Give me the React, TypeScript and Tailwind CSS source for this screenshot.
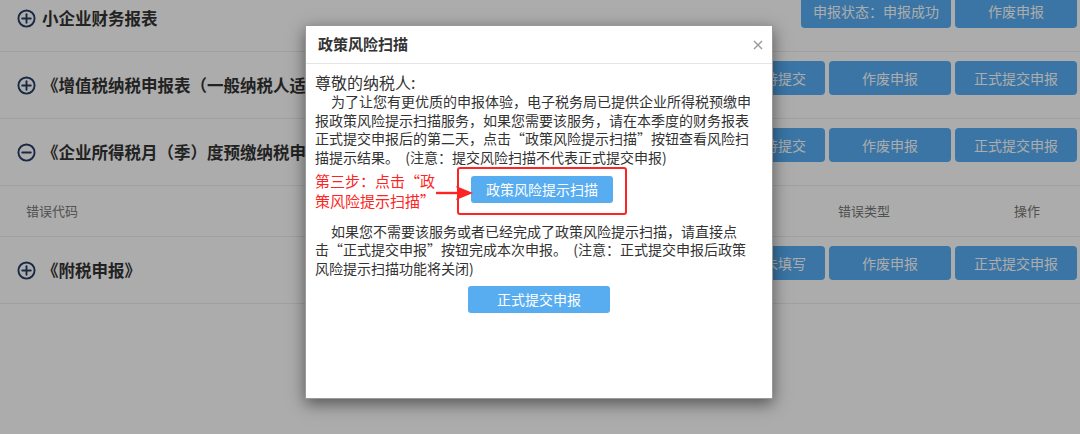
type Row = {
    title: string;
    open?: boolean;
    status: string;
    actions: string[];
};

const rows: Row[] = [
    { title: "小企业财务报表", status: "申报状态：申报成功", actions: ["作废申报"] },
    { title: "《增值税纳税申报表（一般纳税人适用）》", status: "申报状态：待提交", actions: ["作废申报", "正式提交申报"] },
    { title: "《企业所得税月（季）度预缴纳税申报表（A类）》", open: true, status: "申报状态：待提交", actions: ["作废申报", "正式提交申报"] },
];

const lastRow: Row = { title: "《附税申报》", status: "申报状态：未填写", actions: ["作废申报", "正式提交申报"] };

const ToggleIcon = ({ open }: { open?: boolean }) => (
    <svg className="w-[19px] h-[19px] shrink-0" viewBox="0 0 20 20" fill="none" stroke="#263e66" strokeWidth={2}>
        <circle cx="10" cy="10" r="8.5" />
        <path d="M5.5 10h9" strokeLinecap="round" />
        {!open && <path d="M10 5.5v9" strokeLinecap="round" />}
    </svg>
);

const PageButton = ({ label, wide }: { label: string; wide?: boolean }) => (
    <div className={`${wide ? "w-[150px]" : "w-[122px]"} h-[34px] rounded-[4px] bg-[#56aef5] text-white text-[14px] flex items-center justify-center`}>
        {label}
    </div>
);

const ReportRow = ({ row, first }: { row: Row; first?: boolean }) => (
    <div className={`${first ? "-mt-[15px]" : ""} h-[67px] border-b border-[#ececec] flex items-center pl-[17px] pr-[3px]`}>
        <ToggleIcon open={row.open} />
        <span className="ml-[6px] flex-1 min-w-0 text-[16.5px] font-bold text-[#333] whitespace-nowrap overflow-hidden">{row.title}</span>
        <div className="self-start mt-[9px] flex gap-[4px]">
            <PageButton label={row.status} wide />
            {row.actions.map((a) => (
                <PageButton key={a} label={a} />
            ))}
        </div>
    </div>
);

export default function App() {
    return (
        <div className="relative h-[434px] w-full overflow-hidden bg-white font-['Noto_Sans_CJK_SC',sans-serif]">
            {/* page behind the dialog */}
            <div>
                {rows.map((r, i) => (
                    <ReportRow key={r.title} row={r} first={i === 0} />
                ))}
                <div className="h-[51px] border-b border-[#ececec] flex items-center text-[13px] text-[#777] pr-[3px]">
                    <span className="flex-1 pl-[26px]">错误代码</span>
                    <span className="w-[130px] text-center">错误类型</span>
                    <span className="w-[100px] ml-[48px] text-center">操作</span>
                </div>
                <ReportRow row={lastRow} />
            </div>

            {/* backdrop */}
            <div className="absolute inset-0 bg-black/[0.325]" />

            {/* dialog */}
            <div className="absolute left-[305px] top-[25px] w-[468px] h-[374px] bg-white border border-[#999] shadow-[0_5px_15px_rgba(0,0,0,0.5)]">
                <div className="h-[38px] border-b border-[#e5e5e5] flex items-center justify-between pl-[12px] pr-[9px]">
                    <span className="text-[15px] font-bold text-[#333]">政策风险扫描</span>
                    <svg className="w-[10px] h-[10px]" viewBox="0 0 10 10" stroke="#999" strokeWidth={1.4}>
                        <path d="M1 1l8 8M9 1l-8 8" />
                    </svg>
                </div>
                <div className="pl-[9px] pt-[8px] text-[#333]">
                    <div className="text-[16px] leading-[20px]">尊敬的纳税人:</div>
                    <p className="text-[14px] leading-[18.7px] indent-[16px] whitespace-nowrap">
                        为了让您有更优质的申报体验，电子税务局已提供企业所得税预缴申<br />
                        报政策风险提示扫描服务，如果您需要该服务，请在本季度的财务报表<br />
                        正式提交申报后的第二天，点击“政策风险提示扫描”按钮查看风险扫<br />
                        描提示结果。&nbsp;&nbsp;(注意：提交风险扫描不代表正式提交申报)
                    </p>

                    <div className="relative flex items-center h-[48px]">
                        <div className="w-[142px] text-[15px] leading-[20px] text-[#ff2424] whitespace-nowrap">
                            第三步：点击“政<br />
                            策风险提示扫描”
                        </div>
                        <div className="w-[170px] h-[48px] border-2 border-[#ff2424] rounded-[3px] flex justify-center pt-[7px]">
                            <div className="w-[142px] h-[27px] rounded-[3px] bg-[#58adf0] text-white text-[14px] flex items-center justify-center">
                                政策风险提示扫描
                            </div>
                        </div>
                        <svg className="absolute left-[121px] top-[18px] w-[37px] h-[16px]" viewBox="0 0 37 16">
                            <path d="M0 6.8h22v2.4H0z" fill="#ff2424" />
                            <polygon points="20,1 37,8 20,15 23,8" fill="#ff2424" />
                        </svg>
                    </div>

                    <p className="mt-[7px] text-[14px] leading-[18.5px] indent-[16px] whitespace-nowrap">
                        如果您不需要该服务或者已经完成了政策风险提示扫描，请直接点<br />
                        击“正式提交申报”按钮完成本次申报。&nbsp;&nbsp;(注意：正式提交申报后政策<br />
                        风险提示扫描功能将关闭)
                    </p>
                </div>
                <div className="mt-[9px] flex justify-center">
                    <div className="w-[142px] h-[27px] rounded-[3px] bg-[#58adf0] text-white text-[14px] flex items-center justify-center">
                        正式提交申报
                    </div>
                </div>
            </div>
        </div>
    );
}
